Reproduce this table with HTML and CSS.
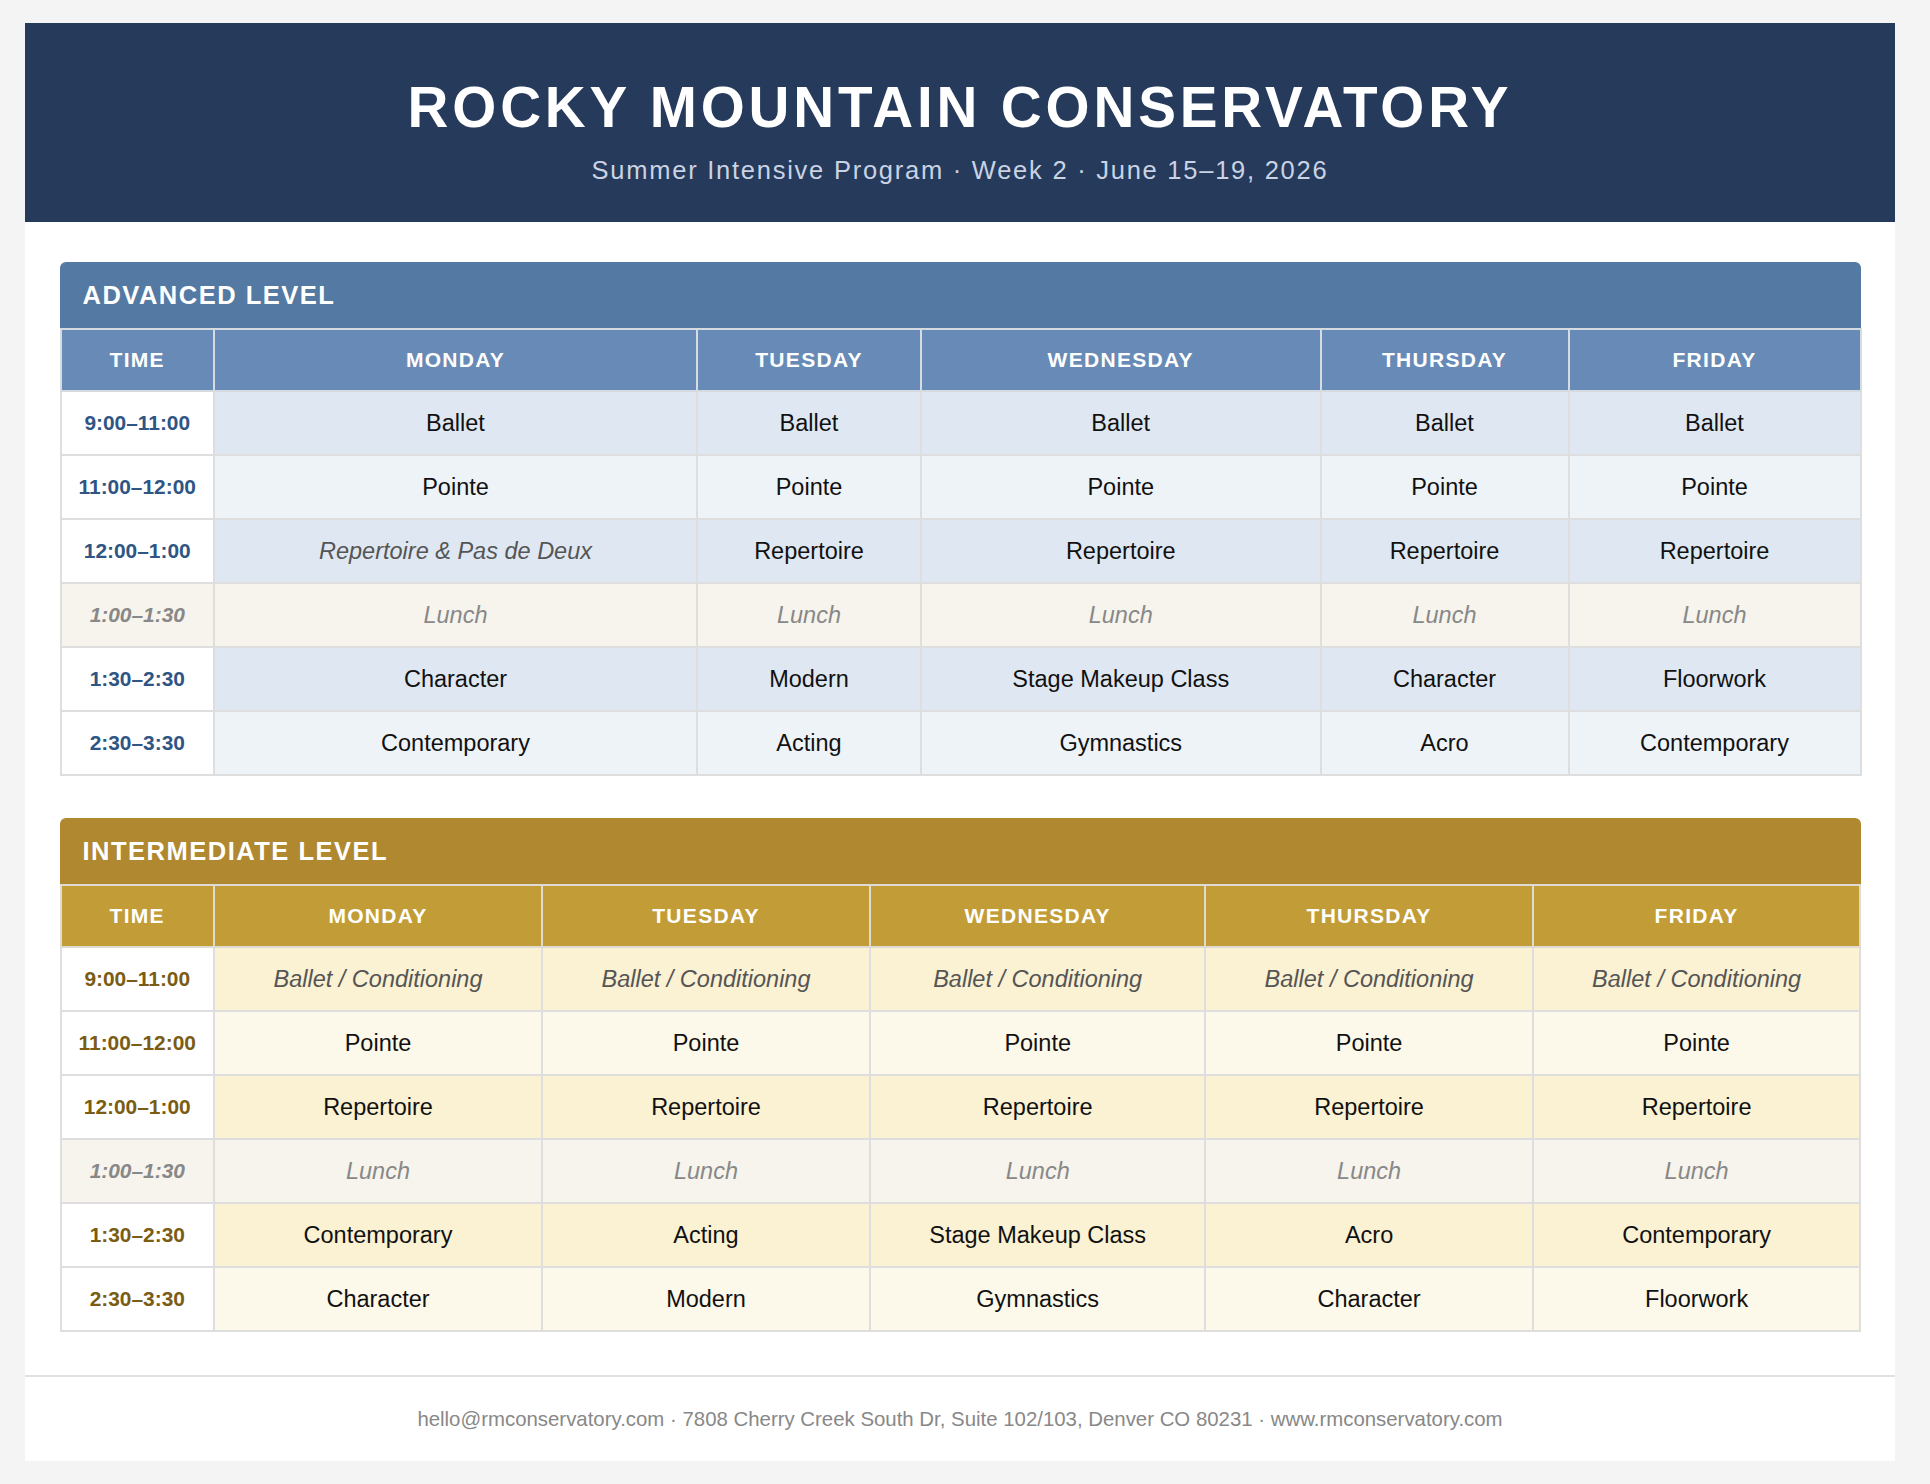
FILE: index.html
```html
<!DOCTYPE html>
<html lang="en">
<head>
<meta charset="utf-8">
<title>Rocky Mountain Conservatory — Summer Intensive Week 2</title>
<link rel="stylesheet" href="styles.css">
</head>
<body>
<div class="page">
  <header class="masthead">
    <h1 class="title">ROCKY MOUNTAIN CONSERVATORY</h1>
    <p class="subtitle">Summer Intensive Program · Week 2 · June 15–19, 2026</p>
  </header>

  <main class="content">
    <section class="level level-adv">
      <h2 class="level-title">ADVANCED LEVEL</h2>
      <table class="sched">
        <colgroup>
          <col class="c-time"><col class="a-mon"><col class="a-tue"><col class="a-wed"><col class="a-thu"><col class="a-fri">
        </colgroup>
        <thead>
          <tr><th>TIME</th><th>MONDAY</th><th>TUESDAY</th><th>WEDNESDAY</th><th>THURSDAY</th><th>FRIDAY</th></tr>
        </thead>
        <tbody>
          <tr class="r-dark"><td class="time">9:00–11:00</td><td>Ballet</td><td>Ballet</td><td>Ballet</td><td>Ballet</td><td>Ballet</td></tr>
          <tr class="r-light"><td class="time">11:00–12:00</td><td>Pointe</td><td>Pointe</td><td>Pointe</td><td>Pointe</td><td>Pointe</td></tr>
          <tr class="r-dark"><td class="time">12:00–1:00</td><td class="note">Repertoire &amp; Pas de Deux</td><td>Repertoire</td><td>Repertoire</td><td>Repertoire</td><td>Repertoire</td></tr>
          <tr class="r-lunch"><td class="time">1:00–1:30</td><td>Lunch</td><td>Lunch</td><td>Lunch</td><td>Lunch</td><td>Lunch</td></tr>
          <tr class="r-dark"><td class="time">1:30–2:30</td><td>Character</td><td>Modern</td><td>Stage Makeup Class</td><td>Character</td><td>Floorwork</td></tr>
          <tr class="r-light"><td class="time">2:30–3:30</td><td>Contemporary</td><td>Acting</td><td>Gymnastics</td><td>Acro</td><td>Contemporary</td></tr>
        </tbody>
      </table>
    </section>

    <section class="level level-int">
      <h2 class="level-title">INTERMEDIATE LEVEL</h2>
      <table class="sched">
        <colgroup>
          <col class="c-time"><col class="i-mon"><col class="i-tue"><col class="i-wed"><col class="i-thu"><col class="i-fri">
        </colgroup>
        <thead>
          <tr><th>TIME</th><th>MONDAY</th><th>TUESDAY</th><th>WEDNESDAY</th><th>THURSDAY</th><th>FRIDAY</th></tr>
        </thead>
        <tbody>
          <tr class="r-dark"><td class="time">9:00–11:00</td><td class="note">Ballet / Conditioning</td><td class="note">Ballet / Conditioning</td><td class="note">Ballet / Conditioning</td><td class="note">Ballet / Conditioning</td><td class="note">Ballet / Conditioning</td></tr>
          <tr class="r-light"><td class="time">11:00–12:00</td><td>Pointe</td><td>Pointe</td><td>Pointe</td><td>Pointe</td><td>Pointe</td></tr>
          <tr class="r-dark"><td class="time">12:00–1:00</td><td>Repertoire</td><td>Repertoire</td><td>Repertoire</td><td>Repertoire</td><td>Repertoire</td></tr>
          <tr class="r-lunch"><td class="time">1:00–1:30</td><td>Lunch</td><td>Lunch</td><td>Lunch</td><td>Lunch</td><td>Lunch</td></tr>
          <tr class="r-dark"><td class="time">1:30–2:30</td><td>Contemporary</td><td>Acting</td><td>Stage Makeup Class</td><td>Acro</td><td>Contemporary</td></tr>
          <tr class="r-light"><td class="time">2:30–3:30</td><td>Character</td><td>Modern</td><td>Gymnastics</td><td>Character</td><td>Floorwork</td></tr>
        </tbody>
      </table>
    </section>
  </main>

  <footer class="footer">
    hello@rmconservatory.com · 7808 Cherry Creek South Dr, Suite 102/103, Denver CO 80231 · www.rmconservatory.com
  </footer>
</div>
</body>
</html>
```

FILE: styles.css
```css
* { box-sizing: border-box; }

html, body {
  margin: 0;
  background: #f4f4f4;
}

body {
  padding: 23px 0 25px 25px;
  font-family: "Liberation Sans", Arial, Helvetica, sans-serif;
  color: #111;
}

.page {
  width: 1870px;
  background: #ffffff;
}

/* Masthead */
.masthead {
  background: #263a5c;
  text-align: center;
  padding: 51px 20px 35px;
}

.title {
  margin: 0;
  font-size: 56.6px;
  line-height: 68px;
  font-weight: 700;
  letter-spacing: 3.85px;
  color: #ffffff;
}

.subtitle {
  margin: 10.5px 0 0;
  font-size: 25.5px;
  line-height: 34.4px;
  letter-spacing: 1.75px;
  color: #c9d3e3;
}

/* Content */
.content {
  padding: 40px 34px 43px 34.5px;
  display: flex;
  flex-direction: column;
  gap: 42px;
}

.level-title {
  margin: 0;
  padding: 19.5px 23px 17px;
  font-size: 25.5px;
  line-height: 29.5px;
  font-weight: 700;
  letter-spacing: 1.5px;
  color: #ffffff;
  border-radius: 6px 6px 0 0;
}

.level-adv .level-title { background: #5479a3; }
.level-int .level-title { background: #b08830; }

.sched {
  width: 100%;
  border-collapse: collapse;
  table-layout: fixed;
}

.c-time { width: 153.5px; }
.a-mon { width: 483px; }
.a-tue { width: 224px; }
.a-wed { width: 399.5px; }
.a-thu { width: 248px; }
.a-fri { width: 292px; }
.i-mon { width: 328px; }
.i-tue { width: 328px; }
.i-wed { width: 335.4px; }
.i-thu { width: 327.4px; }
.i-fri { width: 327.7px; }

.sched th,
.sched td {
  border: 2px solid #dedede;
  text-align: center;
  vertical-align: middle;
}

.sched th {
  height: 62px;
  padding: 0 6px;
  font-size: 21px;
  line-height: 24px;
  font-weight: 700;
  letter-spacing: 1.3px;
  color: #ffffff;
}

.level-adv .sched th { background: #678bb6; border-color: #d6dbe2; }
.level-int .sched th { background: #c29c37; border-color: #dedbd2; }

.sched td {
  height: 64px;
  padding: 0 6px;
  font-size: 23.5px;
  line-height: 28px;
  color: #111;
}

.sched td.time {
  background: #ffffff;
  font-size: 20.9px;
  font-weight: 700;
}

.level-adv td.time { color: #2f5584; }
.level-int td.time { color: #7a5c14; }

.sched td.note {
  font-style: italic;
  color: #555;
}

.level-adv .r-dark td { background: #dfe8f2; }
.level-adv .r-light td { background: #eef3f8; }
.level-int .r-dark td { background: #fbf1d3; }
.level-int .r-light td { background: #fdf9ea; }

.sched .r-dark td.time,
.sched .r-light td.time { background: #ffffff; }

.sched .r-lunch td {
  background: #f6f4ec;
  font-style: italic;
  color: #888;
}

.sched .r-lunch td.time {
  color: #888;
  background: #f6f4ec;
}

/* Footer */
.footer {
  border-top: 2px solid #e2e2e2;
  padding: 29px 20px 27px;
  text-align: center;
  font-size: 20.4px;
  line-height: 27.6px;
  color: #888;
}
```
